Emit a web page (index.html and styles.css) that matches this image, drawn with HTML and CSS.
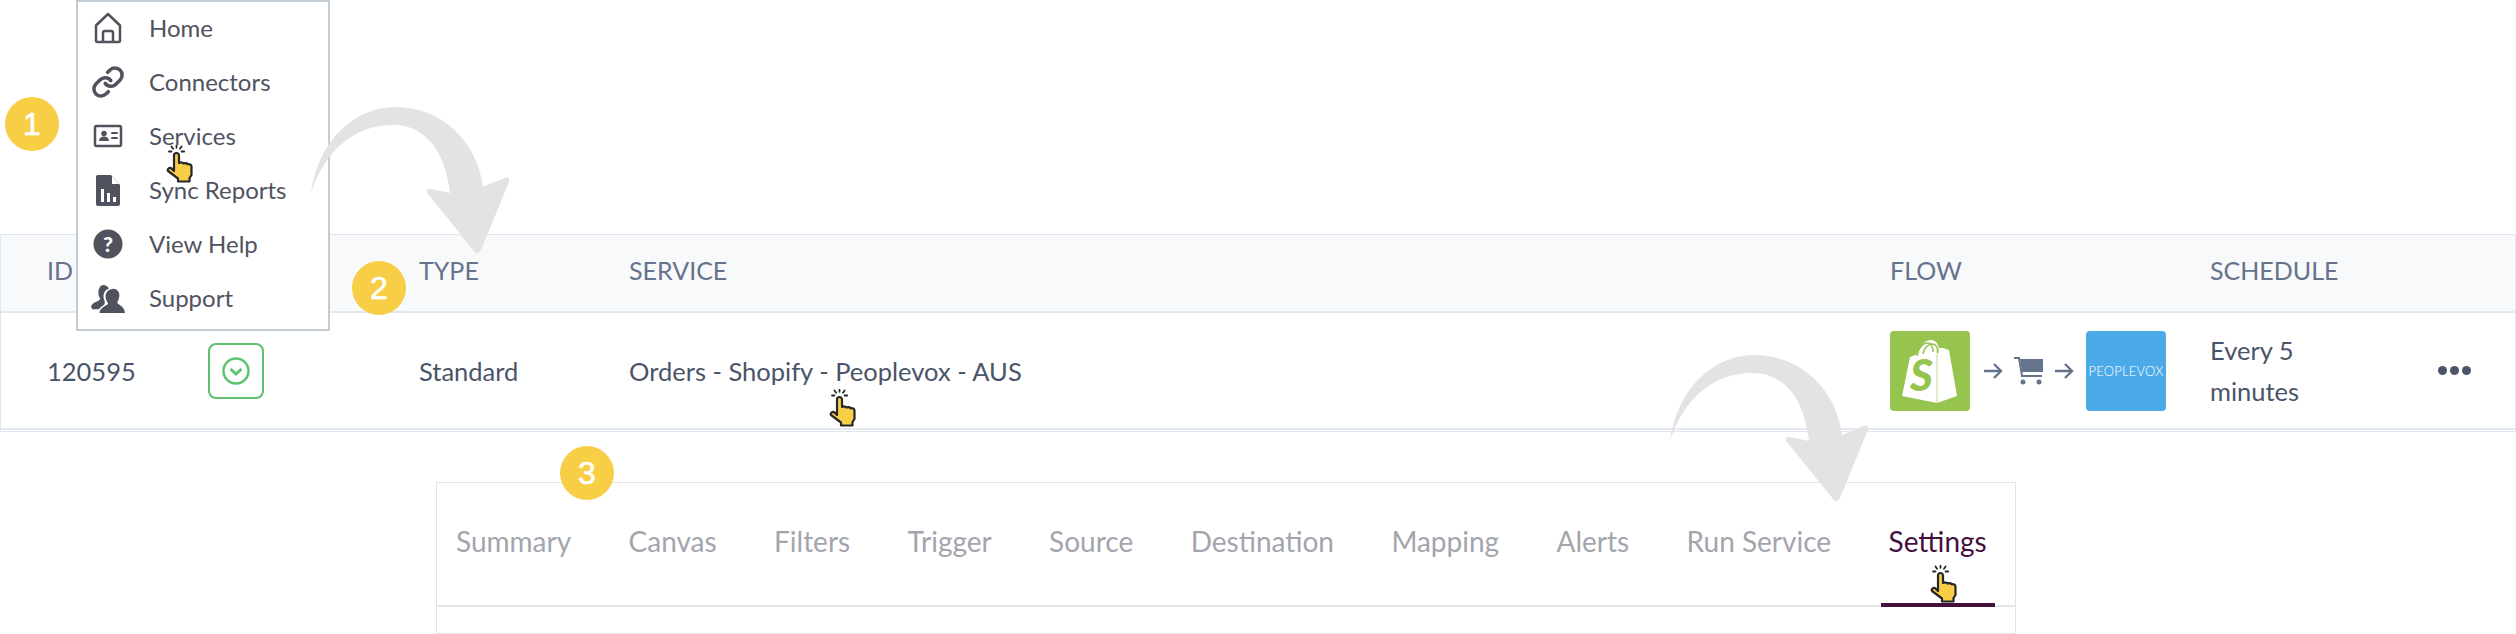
FILE: index.html
```html
<!DOCTYPE html>
<html lang="en">
<head>
  <meta charset="UTF-8" />
  <title>Open service settings</title>
  <link rel="stylesheet" href="styles.css">
</head>
<body>
  <svg class="defs" width="0" height="0">
    <symbol id="hand" viewBox="0 0 28 38">
      <g fill="none" stroke="#26262b" stroke-width="1.8" stroke-linecap="round">
        <path d="M3 6.5h2.5M5.5 1.5l1.6 2.2M10.5 0.8v2M15.6 1.5L14 3.7M15.6 6.5h2.6" />
      </g>
      <path d="M8 26V10.5a2.5 2.5 0 0 1 5 0V18c2-1 4-.5 4.5.5 1.500-.8 3.500-.3 4 .7 2-.5 4 .5 4 2.500V30l-2 3v3.500H12V33.500L2 26c-1-1.500 1-3.500 3-3z" fill="#f8ce46" stroke="#26262b" stroke-width="2.200" stroke-linejoin="round" />
    </symbol>
    <symbol id="curve" viewBox="300 100 220 160">
      <path d="M311 193C318 140 355 107 395 107 445 107 478 145 483 187L504 178C508 176 510 179 509 182L481 250C479 254 476 254 474 251L428 194C425 190 428 188 431 189L450 193C445 150 425 125 393 125 355 125 325 150 311 193Z" fill="#e3e3e3" />
    </symbol>
  </svg>

  <nav class="side-menu">
    <a class="menu-item">
      <svg class="menu-icon icon-home" viewBox="0 0 30 32"><path class="line" d="M3 13.500L15 2l12 11.500V28.500a1.500 1.500 0 0 1-1.500 1.500H4.500A1.500 1.500 0 0 1 3 28.500zM10 30V21a2 2 0 0 1 2-2h6a2 2 0 0 1 2 2v9" /></svg>
      Home
    </a>
    <a class="menu-item">
      <svg class="menu-icon icon-link" viewBox="0 0 24 24"><path class="line" d="M10 13a5 5 0 0 0 7.540.54l3-3a5 5 0 0 0-7.070-7.070l-1.720 1.710M14 11a5 5 0 0 0-7.540-.54l-3 3a5 5 0 0 0 7.070 7.070l1.710-1.710" /></svg>
      Connectors
    </a>
    <a class="menu-item">
      <svg class="menu-icon icon-card" viewBox="0 0 30 24"><rect class="line" x="2" y="2" width="26" height="20" rx="1.500" /><circle class="solid" cx="11" cy="9.500" r="2.800" /><path class="solid" d="M6 17c0-3 2-4.500 5-4.500s5 1.500 5 4.500z" /><path class="line thin" d="M19 9h5M19 14h5" /></svg>
      Services
    </a>
    <a class="menu-item">
      <svg class="menu-icon icon-report" viewBox="0 0 26 32"><path class="solid" d="M3 1h13l9 10v19a2 2 0 0 1-2 2H3a2 2 0 0 1-2-2V3a2 2 0 0 1 2-2z" /><path d="M17 2l7 8h-7z" fill="#fff" /><path d="M6 15h3v13H6zM12 19h3v9h-3zM18 23h3v5h-3z" fill="#fff" /></svg>
      Sync Reports
    </a>
    <a class="menu-item">
      <svg class="menu-icon" viewBox="0 0 32 32"><circle class="solid" cx="16" cy="16" r="15.500" /><text class="help-mark" x="16" y="24">?</text></svg>
      View Help
    </a>
    <a class="menu-item">
      <svg class="menu-icon" viewBox="0 0 36 32"><path class="solid" d="M0 25c1-4 6-5 9-7 1-1 0-3-1-5-1-5 1-11 5-11 3 0 5 2 6 4-5 1-7 7-5 12 1 2 1 4-1 6-2 1-4 3-5 4H1z" /><path class="solid" d="M24 6c4 0 7 4 6 9-.5 3-2 5-2 6 0 2 7 3 8 10v1H9c0-6 8-8 9-10 0-1-2-3-2.500-6C14.500 10 19 6 24 6z" /></svg>
      Support
    </a>
  </nav>

  <section class="service-table">
    <div class="table-row table-head">
      <div>ID</div>
      <div></div>
      <div>TYPE</div>
      <div>SERVICE</div>
      <div>FLOW</div>
      <div>SCHEDULE</div>
      <div></div>
    </div>
    <div class="table-row table-body">
      <div>120595</div>
      <div>
        <span class="status-btn">
          <svg viewBox="0 0 30 30" width="30" height="30"><circle cx="15" cy="15" r="12.500" fill="none" stroke="#5cc26e" stroke-width="2.500" /><path d="M9.500 13l5.500 5 5.500-5" fill="none" stroke="#5cc26e" stroke-width="3" /></svg>
        </span>
      </div>
      <div>Standard</div>
      <div>Orders - Shopify - Peoplevox - AUS</div>
      <div class="flow">
        <span class="logo logo-shopify">
          <svg viewBox="0 0 80 80" width="80" height="80">
            <path d="M12 65L20 26l8-3C30 13 36 9 41 9c4 0 7 3 8 8l4 0 6 2 8 46-20 7z" fill="#fff" />
            <path d="M27 25c1-8 6-13 10-13s6 4 6 9M33 23c1-6 5-10 9-10s6 4 6 9" fill="none" stroke="#96c44e" stroke-width="1.500" />
            <path d="M47 72V18" stroke="#96c44e" stroke-width="0.600" />
            <text class="shopify-s" x="20" y="60">S</text>
          </svg>
        </span>
        <svg class="flow-arrow arrow-in" viewBox="0 0 20 16"><path d="M1 8h17M11 1l7 7-7 7" /></svg>
        <svg class="cart" viewBox="0 0 29 28" width="29" height="28"><path d="M0 1h5l3 18h20" fill="none" stroke="#66738c" stroke-width="2" /><path d="M6 2h23v13H8z" fill="#66738c" /><circle cx="9" cy="25" r="2.500" fill="#66738c" /><circle cx="25" cy="25" r="2.500" fill="#66738c" /></svg>
        <svg class="flow-arrow arrow-out" viewBox="0 0 20 16"><path d="M1 8h17M11 1l7 7-7 7" /></svg>
        <span class="logo logo-peoplevox">PEOPLEVOX</span>
      </div>
      <div class="schedule">Every 5<br>minutes</div>
      <div class="row-actions"><i></i><i></i><i></i></div>
    </div>
  </section>

  <section class="tabs-panel">
    <div class="tabs">
      <a class="tab">Summary</a>
      <a class="tab">Canvas</a>
      <a class="tab">Filters</a>
      <a class="tab">Trigger</a>
      <a class="tab">Source</a>
      <a class="tab">Destination</a>
      <a class="tab">Mapping</a>
      <a class="tab">Alerts</a>
      <a class="tab">Run Service</a>
      <a class="tab active">Settings</a>
    </div>
  </section>

  <!-- walkthrough annotations on top of the screen -->
  <svg class="curve curve-one"><use href="#curve" /></svg>
  <svg class="curve curve-two"><use href="#curve" /></svg>
  <span class="step step-one">1</span>
  <span class="step step-two">2</span>
  <span class="step step-three">3</span>
  <svg class="pointer pointer-one"><use href="#hand" /></svg>
  <svg class="pointer pointer-two"><use href="#hand" /></svg>
  <svg class="pointer pointer-three"><use href="#hand" /></svg>
</body>
</html>
```

FILE: styles.css
```css
* {
  margin: 0;
  padding: 0;
  box-sizing: border-box;
}

body {
  position: relative;
  height: 634px;
  overflow: hidden;
  background: #fff;
  font-family: 'Lato', sans-serif;
  color: #4a5468;
}

.defs {
  position: absolute;
}

/* side menu */
.side-menu {
  position: absolute;
  left: 76px;
  top: 0;
  z-index: 2;
  width: 254px;
  height: 331px;
  background: #fff;
  border: 2px solid #c3cbd3;
}

.menu-item {
  display: flex;
  align-items: center;
  gap: 23px;
  height: 54px;
  padding-left: 12px;
  padding-bottom: 3px;
  font-size: 24px;
  color: #50535f;
}

.menu-icon {
  width: 36px;
  height: 30px;
  flex-shrink: 0;
  margin-top: 1px;
}

.icon-home {
  height: 32px;
}

.icon-link {
  height: 34px;
}

.icon-card {
  height: 24px;
}

.icon-report {
  height: 32px;
}

.line {
  fill: none;
  stroke: #50525e;
  stroke-width: 2.500;
  stroke-linecap: round;
  stroke-linejoin: round;
}

.thin {
  stroke-width: 2;
}

.solid {
  fill: #50525e;
}

.help-mark {
  font: 900 23px 'Lato', sans-serif;
  fill: #fff;
  text-anchor: middle;
}

/* service table */
.service-table {
  position: absolute;
  top: 234px;
  left: 0;
  width: 2516px;
  height: 198px;
  border: 1px solid #e0e6ee;
}

.table-row {
  display: grid;
  grid-template-columns: 161px 211px 210px 1261px 320px 228px 1fr;
  align-items: center;
  padding-left: 46px;
}

.table-head {
  height: 78px;
  padding-bottom: 6px;
  background: #f8f9fb;
  border-bottom: 2px solid #e3e8ef;
  font-size: 25px;
  color: #66738c;
}

.table-body {
  height: 117px;
  border-bottom: 2px solid #e3e8ef;
  font-size: 25.500px;
}

.status-btn {
  display: flex;
  align-items: center;
  justify-content: center;
  width: 56px;
  height: 56px;
  border: 2px solid #5cc26e;
  border-radius: 8px;
}

.flow {
  display: flex;
  align-items: center;
}

.logo {
  display: flex;
  align-items: center;
  justify-content: center;
  width: 80px;
  height: 80px;
  border-radius: 4px;
}

.logo-shopify {
  background: #96c44e;
}

.shopify-s {
  font: italic 900 44px 'Lato', sans-serif;
  fill: #96c44e;
}

.logo-peoplevox {
  background: #4daae9;
  color: #fff;
  font-size: 13px;
  font-weight: 300;
  letter-spacing: 0.2px;
}

.flow-arrow {
  width: 20px;
  height: 16px;
  fill: none;
  stroke: #66738c;
  stroke-width: 2.400;
}

.arrow-in {
  margin: 0 11px 0 13px;
}

.arrow-out {
  margin: 0 12px 0 11px;
}

.schedule {
  line-height: 41px;
}

.row-actions {
  display: flex;
  gap: 3px;
}

.row-actions i {
  width: 9px;
  height: 9px;
  border-radius: 50%;
  background: #4a5468;
}

/* tabs */
.tabs-panel {
  position: absolute;
  left: 436px;
  top: 482px;
  width: 1580px;
  height: 152px;
  border: 1px solid #e3e3e3;
}

.tabs {
  display: flex;
  gap: 41.400px;
  height: 124px;
  padding-left: 11px;
  border-bottom: 2px solid #e5e5e5;
}

.tab {
  height: 124px;
  padding: 40px 8px 0;
  font-size: 28px;
  line-height: 36px;
  color: #a3a5ad;
}

.tab.active {
  color: #44113f;
  border-bottom: 4px solid #44113f;
}

/* annotations */
.curve {
  position: absolute;
  z-index: 3;
  width: 220px;
  height: 160px;
}

.curve-one {
  left: 300px;
  top: 100px;
}

.curve-two {
  left: 1659px;
  top: 348px;
}

.step {
  position: absolute;
  z-index: 4;
  width: 54px;
  height: 54px;
  border-radius: 50%;
  background: #f8ce46;
  color: #fff;
  font-family: 'Liberation Sans', sans-serif;
  font-size: 32px;
  line-height: 54px;
  text-align: center;
  -webkit-text-stroke: 0.6px #fff;
}

.step-one {
  left: 5px;
  top: 97px;
}

.step-two {
  left: 352px;
  top: 261px;
}

.step-three {
  left: 560px;
  top: 446px;
}

.pointer {
  position: absolute;
  z-index: 5;
  width: 28px;
  height: 38px;
}

.pointer-one {
  left: 166px;
  top: 145px;
}

.pointer-two {
  left: 829px;
  top: 389px;
}

.pointer-three {
  left: 1930px;
  top: 565px;
}
```
